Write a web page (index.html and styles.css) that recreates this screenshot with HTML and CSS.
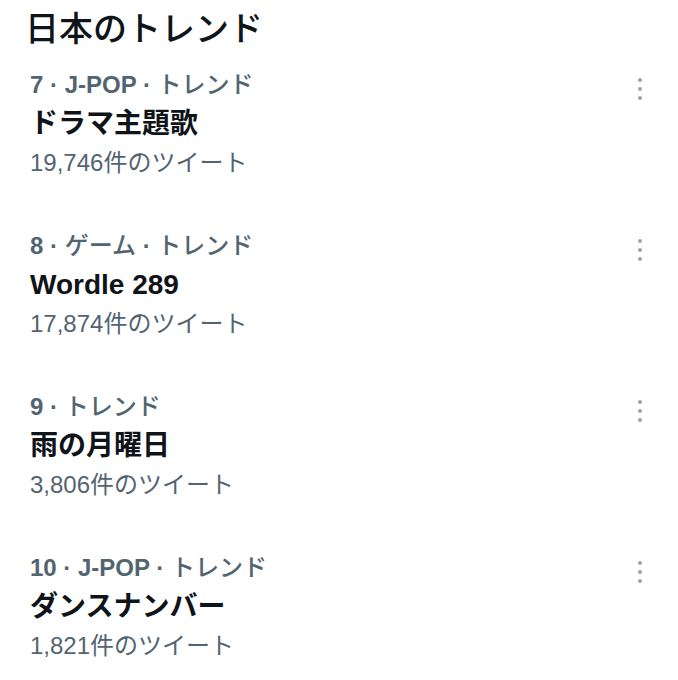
FILE: index.html
```html
<!DOCTYPE html>
<html lang="ja">
<head>
<meta charset="utf-8">
<link rel="stylesheet" href="styles.css">
</head>
<body>
<div class="panel">
  <h1 class="heading">日本のトレンド</h1>
  <div class="trend">
    <div class="info">
      <div class="meta"><span class="latin">7 · J-POP ·</span> トレンド</div>
      <div class="title">ドラマ主題歌</div>
      <div class="count">19,746件のツイート</div>
    </div>
    <div class="more"><span></span><span></span><span></span></div>
  </div>
  <div class="trend">
    <div class="info">
      <div class="meta"><span class="latin">8 ·</span> ゲーム <span class="latin">·</span> トレンド</div>
      <div class="title">Wordle 289</div>
      <div class="count">17,874件のツイート</div>
    </div>
    <div class="more"><span></span><span></span><span></span></div>
  </div>
  <div class="trend">
    <div class="info">
      <div class="meta"><span class="latin">9 ·</span> トレンド</div>
      <div class="title">雨の月曜日</div>
      <div class="count">3,806件のツイート</div>
    </div>
    <div class="more"><span></span><span></span><span></span></div>
  </div>
  <div class="trend">
    <div class="info">
      <div class="meta"><span class="latin">10 · J-POP ·</span> トレンド</div>
      <div class="title">ダンスナンバー</div>
      <div class="count">1,821件のツイート</div>
    </div>
    <div class="more"><span></span><span></span><span></span></div>
  </div>
</div>
</body>
</html>
```
FILE: styles.css
```css
html, body {
  margin: 0;
  padding: 0;
  background: #ffffff;
}
body {
  font-family: "Liberation Sans", "Noto Sans CJK JP", sans-serif;
  color: #0f1419;
}
.panel {
  width: 678px;
  height: 680px;
  overflow: hidden;
}
.heading {
  margin: 0;
  padding-left: 25px;
  font-size: 34px;
  font-weight: 500;
  line-height: 58px;
  color: #0f1419;
}
.trend {
  display: flex;
  align-items: flex-start;
  justify-content: space-between;
  height: 161px;
  box-sizing: border-box;
  padding: 7px 28px 0 30px;
}
.info {
  display: flex;
  flex-direction: column;
}
.meta {
  font-size: 24px;
  line-height: 39px;
  font-weight: 500;
  color: #536471;
}
.meta .latin {
  font-weight: 700;
}
.title {
  font-size: 28px;
  line-height: 39px;
  font-weight: 700;
  color: #0f1419;
}
.count {
  font-size: 24px;
  line-height: 39px;
  font-weight: 400;
  color: #536471;
}
.more {
  display: flex;
  flex-direction: column;
  align-items: center;
  gap: 5px;
  width: 20px;
  padding-top: 13px;
}
.more span {
  display: block;
  width: 4px;
  height: 4px;
  border-radius: 50%;
  background: #9aa3ac;
}
```
